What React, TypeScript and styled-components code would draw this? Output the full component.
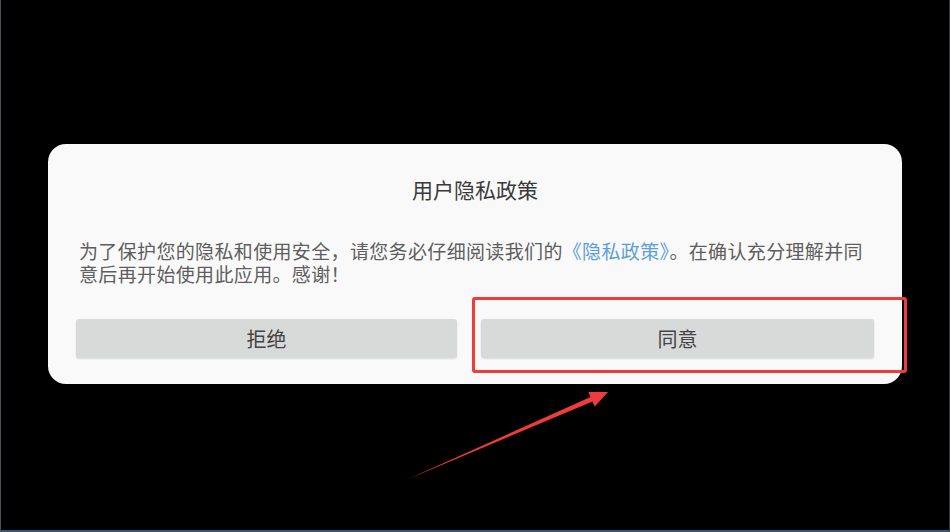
import React from "react";
import styled, { createGlobalStyle } from "styled-components";

const GlobalStyle = createGlobalStyle`
    html, body {
        margin: 0;
        padding: 0;
        background: #000;
    }
    body {
        font-family: "Noto Sans CJK SC", "Noto Sans", sans-serif;
    }
`;

const Colors = {
    screen: "#000000",
    dialog: "#f9f9f9",
    title: "#3a3a3a",
    text: "#5e5e5e",
    link: "#5c9fd6",
    button: "#d8d9d9",
    buttonText: "#444444",
    mark: "#ef3b3b",
};

export default function App() {
    return (
        <Page>
            <GlobalStyle />
            <Dialog>
                <Title>用户隐私政策</Title>
                <Message>
                    <Line>
                        为了保护您的隐私和使用安全，请您务必仔细阅读我们的
                        <Link>《隐私政策》</Link>。在确认充分理解并同
                    </Line>
                    <Line>意后再开始使用此应用。感谢！</Line>
                </Message>
                <ButtonRow>
                    <DialogButton $grow={381}>拒绝</DialogButton>
                    <DialogButton $grow={393}>同意</DialogButton>
                </ButtonRow>
                <Highlight />
            </Dialog>
            <Arrow viewBox="0 0 950 532">
                <polygon
                    points="405,480 591.5,401.5 593.7,406.5 607,392 587.3,391.9 589.5,397 "
                    fill={Colors.mark}
                />
            </Arrow>
        </Page>
    );
}

const Page = styled.div`
    position: relative;
    width: 950px;
    height: 532px;
    box-sizing: border-box;
    background: ${Colors.screen};
    padding: 144px 0 0 48px;
    border-left: 1px solid #44525e;
    border-right: 1px solid #2a3448;
    border-bottom: 2px solid #35577a;
    overflow: hidden;
`;

const Dialog = styled.div`
    position: relative;
    width: 854px;
    height: 240px;
    box-sizing: border-box;
    margin-left: -1px;
    background: ${Colors.dialog};
    border-radius: 18px;
    display: flex;
    flex-direction: column;
    padding: 31px 28px 26px;
`;

const Title = styled.div`
    font-size: 21px;
    line-height: 28px;
    color: ${Colors.title};
    text-align: center;
`;

const Message = styled.div`
    margin-top: 36px;
    padding: 0 3px;
    display: flex;
    flex-direction: column;
    font-size: 19px;
    letter-spacing: 0.35px;
    color: ${Colors.text};
    white-space: nowrap;
`;

const Line = styled.div`
    line-height: 23px;
`;

const Link = styled.span`
    color: ${Colors.link};
`;

const ButtonRow = styled.div`
    margin-top: auto;
    display: flex;
    gap: 24px;
`;

const DialogButton = styled.button<{ $grow: number }>`
    flex: ${(p) => p.$grow} 1 0;
    height: 39px;
    border: none;
    border-radius: 3px;
    background: ${Colors.button};
    box-shadow: 0 1px 2px rgba(0, 0, 0, 0.12);
    font-family: "Noto Sans CJK SC", "Noto Sans", sans-serif;
    font-size: 20px;
    color: ${Colors.buttonText};
    padding: 0;
`;

const Highlight = styled.div`
    position: absolute;
    left: 424px;
    top: 153px;
    width: 435px;
    height: 76px;
    box-sizing: border-box;
    border: 3px solid ${Colors.mark};
    border-radius: 3px;
    pointer-events: none;
`;

const Arrow = styled.svg`
    position: absolute;
    left: 0;
    top: 0;
    width: 950px;
    height: 532px;
    pointer-events: none;
`;
